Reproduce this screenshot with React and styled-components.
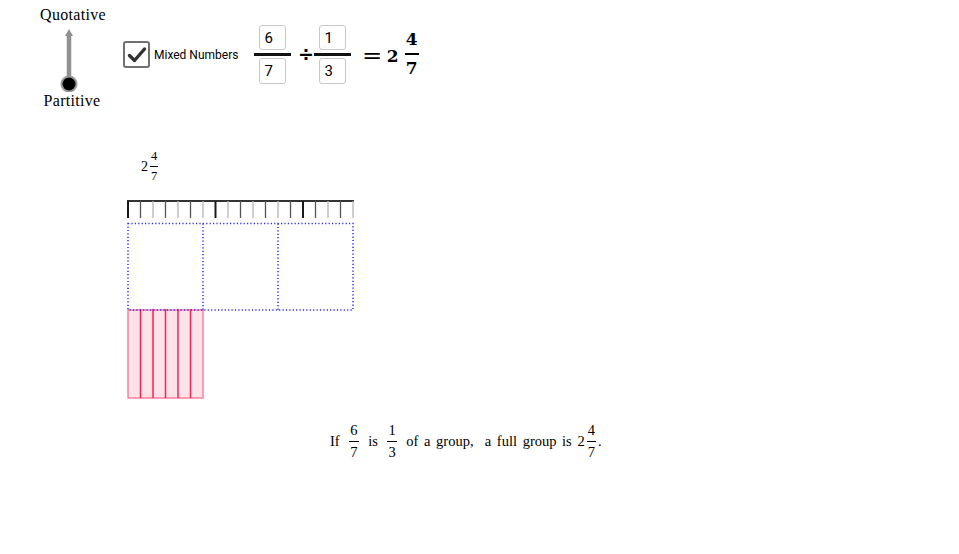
import React from "react";
import styled, { createGlobalStyle } from "styled-components";

const Global = createGlobalStyle`
  html, body { margin: 0; padding: 0; background: #fff; }
  body { font-family: "Liberation Serif", serif; color: #000; }
`;

const Page = styled.div`
  width: 959px;
  height: 554px;
  overflow: hidden;
  background: #fff;
`;

const TopBar = styled.div`
  display: flex;
  align-items: flex-start;
  height: 110px;
  padding: 6px 0 0 41px;
  box-sizing: border-box;
`;

const SliderColumn = styled.div`
  width: 64px;
  display: flex;
  flex-direction: column;
  align-items: center;
`;

const SerifLabel = styled.div`
  font-family: "Liberation Serif", serif;
  font-size: 16px;
  line-height: 18px;
  letter-spacing: 0.3px;
  margin-left: ${(p) => p.$shift || 0}px;
`;

const SliderSvg = styled.svg`
  display: block;
  width: 64px;
  height: 68px;
`;

const CheckGroup = styled.div`
  display: flex;
  align-items: center;
  margin: 35px 0 0 18px;
  gap: 4px;
`;

const CheckBox = styled.div`
  width: 27px;
  height: 27px;
  box-sizing: border-box;
  border: 2px solid #707070;
  border-radius: 3px;
  display: flex;
  align-items: center;
  justify-content: center;
`;

const SansLabel = styled.span`
  font-family: Roboto, "Liberation Sans", sans-serif;
  font-size: 12px;
  color: #000;
`;

const Expression = styled.div`
  display: flex;
  align-items: center;
  margin: 19px 0 0 16px;
  height: 58px;
`;

const InputFraction = styled.div`
  display: flex;
  flex-direction: column;
  align-items: center;
  width: 37px;
`;

const InputBox = styled.div`
  width: 27px;
  height: ${(p) => p.$h}px;
  box-sizing: border-box;
  border: 1px solid #c8c8c8;
  border-radius: 3px;
  background: #fff;
  font-family: Roboto, "Liberation Sans", sans-serif;
  font-size: 15px;
  line-height: 1;
  padding: 5px 0 0 4px;
  text-align: left;
  color: #000;
`;

const InputBar = styled.div`
  width: 37px;
  height: 3px;
  background: #111;
  margin: 3px 0 2px;
`;

const Divide = styled.span`
  font-family: "DejaVu Sans", sans-serif;
  font-weight: bold;
  font-size: 19px;
  width: 23px;
  text-align: center;
  margin-left: 3px;
  margin-right: -3px;
`;

const BoldResult = styled.div`
  display: flex;
  align-items: center;
  margin-left: 12px;
  font-family: "DejaVu Serif", serif;
  font-weight: bold;
  font-size: 17px;
`;

const BigEquals = styled.span`
  font-family: "DejaVu Sans", sans-serif;
  font-size: 22px;
  font-weight: normal;
  transform: scaleX(1.1);
  margin-right: 5px;
  margin-top: 3px;
`;

const Whole = styled.span`
  margin-right: ${(p) => p.$mr}px;
  margin-top: ${(p) => p.$mt || 0}px;
`;

const Frac = styled.span`
  display: inline-flex;
  flex-direction: column;
  align-items: center;
  vertical-align: middle;
  font-size: ${(p) => p.$size}px;
  line-height: 1;
  padding: 0 1px;
  margin: 0 ${(p) => p.$mx ?? 2}px;
`;

const FracBar = styled.span`
  display: block;
  align-self: stretch;
  height: ${(p) => p.$t || 1}px;
  background: #000;
  margin: ${(p) => p.$gap}px -1px;
`;

const LabelRow = styled.div`
  margin: 42px 0 0 141px;
  height: 28px;
  display: flex;
  align-items: center;
  font-family: "Liberation Serif", serif;
  font-size: 14px;
`;

const Diagram = styled.svg`
  display: block;
  margin: 15px 0 0 120px;
  width: 240px;
  height: 210px;
`;

const Sentence = styled.div`
  margin: 20px 0 0 330px;
  height: 32px;
  display: flex;
  align-items: center;
  font-family: "Liberation Serif", serif;
  font-size: 14.5px;
  white-space: pre;
  word-spacing: 2px;
`;

const Fraction = ({ n, d, size, gap = 2, t = 1, mx }) => (
  <Frac $size={size} $mx={mx}>
    <span>{n}</span>
    <FracBar $gap={gap} $t={t} />
    <span>{d}</span>
  </Frac>
);

const Slider = () => (
  <SliderSvg viewBox="0 0 64 68">
    <line x1="28" y1="11" x2="28" y2="60" stroke="#909090" strokeWidth="4.5" />
    <polygon points="24,12 28,5 32,12" fill="#909090" />
    <circle cx="28" cy="60" r="8.5" fill="#9a9a9a" />
    <circle cx="28" cy="60" r="6.5" fill="#000" />
  </SliderSvg>
);

const Diag = () => {
  const ticks = [];
  for (let k = 0; k <= 18; k++) {
    const x = 128 + 12.5 * k;
    const major = k % 7 === 0;
    const color = major ? "#1a1a1a" : k % 2 === 1 ? "#555" : "#b5b5b5";
    ticks.push(
      <line key={k} x1={x} y1={201} x2={x} y2={218} stroke={color} strokeWidth={major ? 2 : 1.3} />
    );
  }
  const pinkLines = [];
  for (let k = 1; k <= 5; k++) {
    const x = 128 + 12.5 * k;
    pinkLines.push(<line key={k} x1={x} y1={309} x2={x} y2={398} stroke="#ff1f4f" strokeWidth="1.5" />);
  }
  return (
    <Diagram viewBox="120 195 240 210">
      <line x1="127" y1="201" x2="354" y2="201" stroke="#333" strokeWidth="2" />
      {ticks}
      <rect x="128" y="310" width="75" height="88" fill="#ffe3e8" stroke="#ff6f8f" strokeWidth="1.3" />
      {pinkLines}
      <g stroke="#2a2aff" strokeWidth="1.5" strokeDasharray="1.2 2.2" fill="none">
        <rect x="128" y="223.5" width="225" height="86.5" />
        <line x1="203" y1="223.5" x2="203" y2="310" />
        <line x1="278" y1="223.5" x2="278" y2="310" />
      </g>
    </Diagram>
  );
};

export default function App() {
  return (
    <Page>
      <Global />
      <TopBar>
        <SliderColumn>
          <SerifLabel>Quotative</SerifLabel>
          <Slider />
          <SerifLabel $shift={-2}>Partitive</SerifLabel>
        </SliderColumn>
        <CheckGroup>
          <CheckBox>
            <svg width="20" height="18" viewBox="0 0 20 18">
              <polyline points="2.5,9.5 7.5,14.5 17.5,3" fill="none" stroke="#333" strokeWidth="3.4" strokeLinecap="round" strokeLinejoin="round" />
            </svg>
          </CheckBox>
          <SansLabel>Mixed Numbers</SansLabel>
        </CheckGroup>
        <Expression>
          <InputFraction>
            <InputBox $h={25}>6</InputBox>
            <InputBar />
            <InputBox $h={26}>7</InputBox>
          </InputFraction>
          <Divide>÷</Divide>
          <InputFraction>
            <InputBox $h={25}>1</InputBox>
            <InputBar />
            <InputBox $h={26}>3</InputBox>
          </InputFraction>
          <BoldResult>
            <BigEquals>=</BigEquals>
            <Whole $mr={6} $mt={3}>2</Whole>
            <Fraction n="4" d="7" size={17} gap={5} t={1.5} mx={0} />
          </BoldResult>
        </Expression>
      </TopBar>
      <LabelRow>
        <Whole $mr={1} $mt={2}>2</Whole>
        <Fraction n="4" d="7" size={12.5} gap={3} mx={1} />
      </LabelRow>
      <Diag />
      <Sentence>
        <span>If </span>
        <Fraction n="6" d="7" size={14.5} gap={3} mx={4} />
        <span> is </span>
        <Fraction n="1" d="3" size={14.5} gap={3} mx={4} />
        <span> of a group,  a full group is 2</span>
        <Fraction n="4" d="7" size={14.5} gap={3} mx={2} />
        <span>.</span>
      </Sentence>
    </Page>
  );
}
